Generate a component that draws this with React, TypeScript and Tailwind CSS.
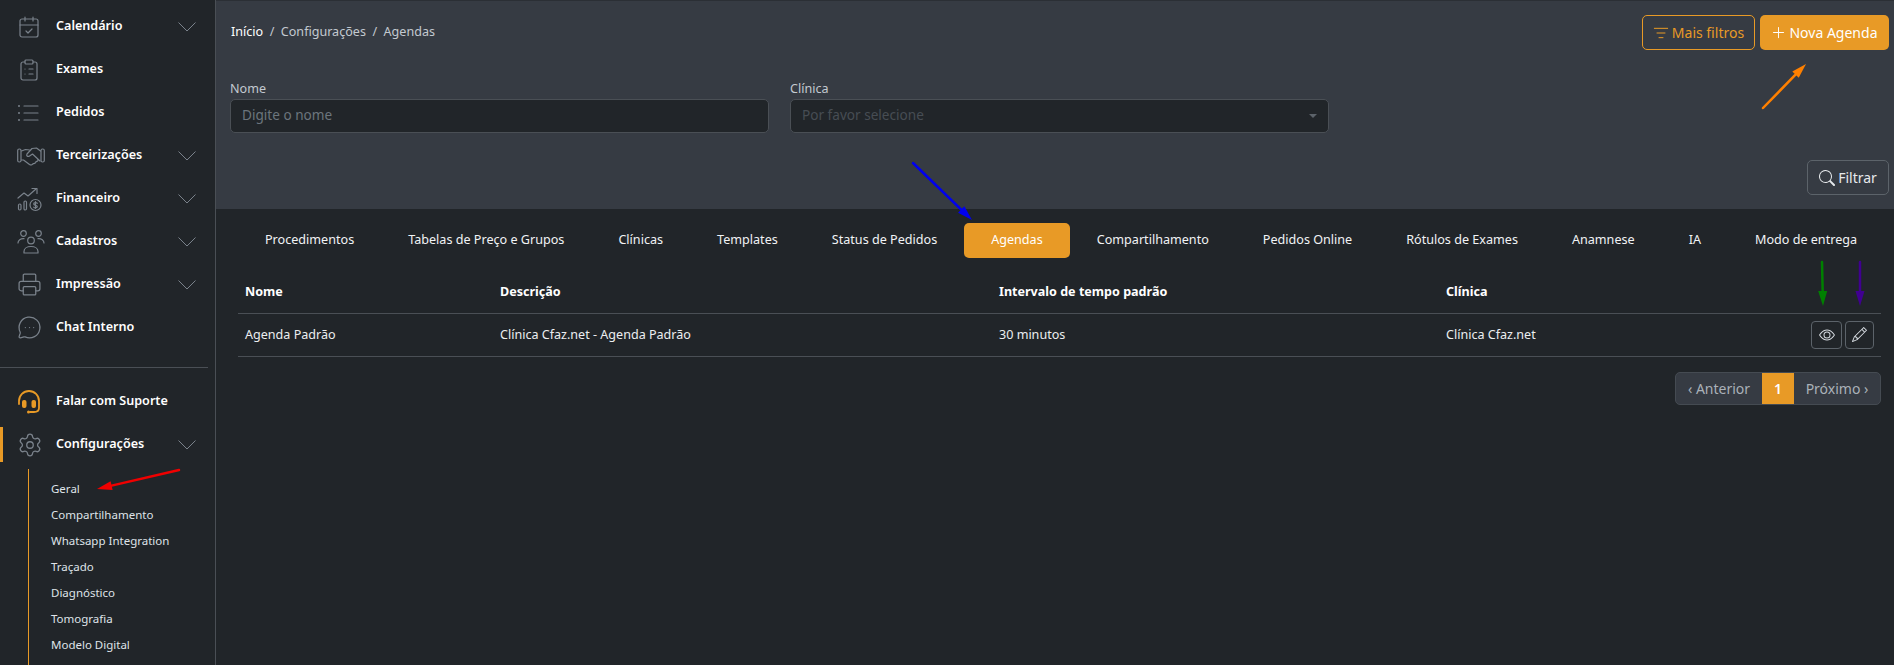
import React from "react";
import { CalendarCheck, ClipboardList, Printer, MessageCircleMore, Settings, ListFilter } from "lucide-react";
import { BsEye, BsPencil, BsSearch, BsPlusLg } from "react-icons/bs";

const GRAY = "#7a828b";

const Finance = () => (
  <svg width="26" height="26" viewBox="0 0 26 26" fill="none" stroke={GRAY} strokeWidth="1.2" strokeLinecap="round" strokeLinejoin="round">
    <path d="M1 12l6-5 4 3 8-7" />
    <path d="M15 2.500h5v5" />
    <rect x="1.500" y="18" width="2.500" height="6" rx="1.200" />
    <rect x="7" y="15" width="2.500" height="9" rx="1.200" />
    <circle cx="18.500" cy="19" r="5.500" />
    <path d="M20.300 17.300c-.5-.8-3.600-1-3.600.7 0 1.700 3.600.9 3.600 2.500 0 1.700-3.100 1.500-3.600.7M18.500 15.500v7" />
  </svg>
);

const People = () => (
  <svg width="28" height="24" viewBox="0 0 28 24" fill="none" stroke={GRAY} strokeWidth="1.2" strokeLinecap="round" strokeLinejoin="round">
    <circle cx="6.500" cy="3.500" r="2.800" />
    <circle cx="21.500" cy="3.500" r="2.800" />
    <circle cx="14" cy="10.500" r="3.300" />
    <path d="M1 13c0-3 2.500-4.500 6-4.300" />
    <path d="M27 13c0-3-2.500-4.500-6-4.300" />
    <path d="M7 23v-1.500c0-3 3-5 7-5s7 2 7 5V23z" />
  </svg>
);

const ListIcon = () => (
  <svg width="22" height="18" viewBox="0 0 22 18" fill="none" stroke={GRAY} strokeWidth="1.2" strokeLinecap="round">
    <path d="M7 2h14M7 9h14M7 16h14" />
    <circle cx="2" cy="2" r="1" fill={GRAY} stroke="none" />
    <circle cx="2" cy="9" r="1" fill={GRAY} stroke="none" />
    <circle cx="2" cy="16" r="1" fill={GRAY} stroke="none" />
  </svg>
);

const Shake = () => (
  <svg width="28" height="20" viewBox="0 0 28 20" fill="none" stroke={GRAY} strokeWidth="1.2" strokeLinecap="round" strokeLinejoin="round">
    <rect x="0.700" y="3" width="3.300" height="13" rx="1.500" />
    <rect x="24" y="3" width="3.300" height="13" rx="1.500" />
    <path d="M4.500 5l4-1.500 4 .5" />
    <path d="M23.500 5l-4-3-4.500.5-5 5.500c-1 1.500.5 3 2.200 2.200l3.300-2.200 7.500 7" />
    <path d="M4.500 14l2 0 6 4.500c1.800 1 3.500 0 3.500-1 1.800.3 3-.7 3-2 1.200 0 2.500-.8 2-2" />
  </svg>
);

const Support = () => (
  <svg width="24" height="24" viewBox="0 0 24 24" fill="none" stroke="#e89a26" strokeWidth="1.800" strokeLinecap="round">
    <path d="M2 14v-3a10 10 0 0 1 20 0v7c0 2.500-2 4-5 4h-4" />
    <rect x="5" y="10" width="4.500" height="8" rx="2" fill="#e89a26" stroke="none" />
    <rect x="14.500" y="10" width="4.500" height="8" rx="2" fill="#e89a26" stroke="none" />
    <circle cx="11.500" cy="22" r="1.500" fill="#e89a26" stroke="none" />
  </svg>
);

const Chevron = () => (
  <svg width="18" height="10" viewBox="0 0 18 10" fill="none" stroke={GRAY} strokeWidth="1">
    <path d="M0.500 0.500L9 9L17.500 0.500" />
  </svg>
);

const navTop = [
  { label: "Calendário", icon: <CalendarCheck size={24} strokeWidth={1.2} color={GRAY} />, chev: true },
  { label: "Exames", icon: <ClipboardList size={24} strokeWidth={1.2} color={GRAY} /> },
  { label: "Pedidos", icon: <ListIcon /> },
  { label: "Terceirizações", icon: <Shake />, chev: true },
  { label: "Financeiro", icon: <Finance />, chev: true },
  { label: "Cadastros", icon: <People />, chev: true },
  { label: "Impressão", icon: <Printer size={25} strokeWidth={1.2} color={GRAY} />, chev: true },
  { label: "Chat Interno", icon: <MessageCircleMore size={25} strokeWidth={1.2} color={GRAY} /> },
];
const subs = ["Geral", "Compartilhamento", "Whatsapp Integration", "Traçado", "Diagnóstico", "Tomografia", "Modelo Digital"];
const tabs = ["Procedimentos", "Tabelas de Preço e Grupos", "Clínicas", "Templates", "Status de Pedidos", "Agendas", "Compartilhamento", "Pedidos Online", "Rótulos de Exames", "Anamnese", "IA", "Modo de entrega"];

function NavItem({ label, icon, chev, active }: { label: string; icon: React.ReactNode; chev?: boolean; active?: boolean }) {
  return (
    <div className={active ? "my-[4px] flex h-[35px] items-center border-l-[3px] border-[#e89a26] pl-[14px] pr-[19px]" : "flex h-[43px] items-center pl-[17px] pr-[19px]"}>
      <span className="flex w-[39px] shrink-0 items-center">{icon}</span>
      <span className="flex-1 text-[12.6px] font-semibold text-white">{label}</span>
      {chev && <Chevron />}
    </div>
  );
}

function Arrow({ x1, y1, x2, y2, color }: { x1: number; y1: number; x2: number; y2: number; color: string }) {
  const a = Math.atan2(y2 - y1, x2 - x1);
  const L = 15, W = 4.5;
  const bx = x2 - L * Math.cos(a), by = y2 - L * Math.sin(a);
  const nx = -Math.sin(a) * W, ny = Math.cos(a) * W;
  return (
    <g>
      <line x1={x1} y1={y1} x2={bx} y2={by} stroke={color} strokeWidth="2.500" strokeLinecap="round" />
      <polygon points={`${x2},${y2} ${bx + nx},${by + ny} ${bx - nx},${by - ny}`} fill={color} />
    </g>
  );
}

export default function App() {
  return (
    <div className="relative flex h-[665px] w-[1894px] overflow-hidden bg-[#212529] font-['Noto_Sans',sans-serif] text-[12.57px] text-white">
      <aside className="flex w-[216px] shrink-0 flex-col border-r border-[#4a4f55] pt-[5px]">
        {navTop.map((n) => <NavItem key={n.label} {...n} />)}
        <div className="mt-[18px] mr-[7px] border-t border-[#4a4f55]" />
        <div className="mt-[12px]">
          <NavItem label="Falar com Suporte" icon={<Support />} />
          <NavItem label="Configurações" icon={<Settings size={26} strokeWidth={1.2} color={GRAY} />} chev active />
        </div>
        <div className="ml-[28px] mt-[3px] flex-1 border-l border-[#e89a26] pt-[7px] pl-[22px]">
          {subs.map((s) => (
            <div key={s} className="flex h-[26px] items-center text-[11.5px] text-[#dfe3e8]">{s}</div>
          ))}
        </div>
      </aside>

      <main className="flex min-w-0 flex-1 flex-col">
        <section className="h-[209px] border-t border-[#2b2f35] bg-[#363b43] pl-[14px] pr-[5px]">
          <div className="flex items-start justify-between pt-[14px]">
            <div className="flex gap-[6.5px] pl-[1px] pt-[8px] text-[12.57px] leading-[18px] text-[#c3c9d0]">
              <span className="text-white">Início</span><span>/</span><span>Configurações</span><span>/</span><span>Agendas</span>
            </div>
            <div className="flex gap-[5px]">
              <button className="flex h-[35px] w-[113px] items-center justify-center gap-[3px] rounded-[5px] border border-[#e89a26] text-[14px] text-[#e89a26]">
                <ListFilter size={16} strokeWidth={1.5} />Mais filtros
              </button>
              <button className="flex h-[35px] w-[129px] items-center justify-center gap-[3px] rounded-[5px] bg-[#e89a26] text-[14px] text-white">
                <BsPlusLg size={15} />Nova Agenda
              </button>
            </div>
          </div>
          <div className="mt-[29px] flex gap-[21px]">
            <label className="block w-[539px]">
              <div className="text-[12.57px] leading-[20px] text-[#c3c9d0]">Nome</div>
              <div className="flex h-[34px] items-center rounded-[5px] border border-[#4a4f55] bg-[#212529] px-[11px] pb-[1px] text-[13.6px] text-[#6c757d]">Digite o nome</div>
            </label>
            <label className="block w-[539px]">
              <div className="text-[12.57px] leading-[20px] text-[#c3c9d0]">Clínica</div>
              <div className="flex h-[34px] items-center justify-between rounded-[5px] border border-[#4a4f55] bg-[#212529] px-[11px] pb-[1px] text-[13.6px] text-[#474d54]">
                Por favor selecione
                <span className="h-0 w-0 border-x-[4px] border-t-[4px] border-x-transparent border-t-[#5c636a]" />
              </div>
            </label>
          </div>
          <div className="mt-[27px] flex justify-end">
            <button className="flex h-[35px] w-[82px] items-center justify-center gap-[3px] rounded-[5px] border border-[#5c636a] text-[14px] text-[#e6e9ec]">
              <BsSearch size={16} />Filtrar
            </button>
          </div>
        </section>

        <section className="px-[13px]">
          <div className="mt-[14px] flex h-[35px] items-center pl-[9px]">
            {tabs.map((t) => (
              <div key={t} className={`flex h-[35px] items-center whitespace-nowrap rounded-[5px] px-[27px] pb-[1px] text-[12.6px] ${t === "Agendas" ? "bg-[#e89a26] text-white" : "text-[#f1f3f5]"}`}>{t}</div>
            ))}
          </div>
          <div className="ml-[9px] mt-[13px]">
            <table className="w-full table-fixed border-collapse text-left text-[12.57px]">
              <colgroup>
                <col className="w-[255px]" /><col className="w-[499px]" /><col className="w-[447px]" /><col />
              </colgroup>
              <thead>
                <tr className="h-[42px] border-b border-[#4a4f55]">
                  <th className="px-[7px] pt-[1px] font-bold">Nome</th><th className="px-[7px] pt-[1px] font-bold">Descrição</th><th className="px-[7px] pt-[1px] font-bold">Intervalo de tempo padrão</th><th className="px-[7px] pt-[1px] font-bold">Clínica</th>
                </tr>
              </thead>
              <tbody>
                <tr className="h-[43px] border-b border-[#4a4f55] text-[#eceef0]">
                  <td className="px-[7px] pt-[1px]">Agenda Padrão</td>
                  <td className="px-[7px] pt-[1px]">Clínica Cfaz.net - Agenda Padrão</td>
                  <td className="px-[7px] pt-[1px]">30 minutos</td>
                  <td className="px-[7px]">
                    <div className="flex items-center justify-between">
                      <span className="pt-[1px]">Clínica Cfaz.net</span>
                      <span className="flex gap-[3px]">
                        <span className="flex h-[28px] w-[31px] items-center justify-center rounded-[4px] border border-[#5c636a]"><BsEye size={16} className="text-[#d5dae0]" /></span>
                        <span className="flex h-[28px] w-[29px] items-center justify-center rounded-[4px] border border-[#5c636a]"><BsPencil size={15} className="text-[#d5dae0]" /></span>
                      </span>
                    </div>
                  </td>
                </tr>
              </tbody>
            </table>
            <div className="mt-[15px] flex justify-end">
              <div className="flex h-[33px] overflow-hidden rounded-[5px] border border-[#454b52] bg-[#363b43] text-[14px] text-[#aab1b8]">
                <span className="flex w-[86px] items-center justify-center">‹ Anterior</span>
                <span className="flex w-[32px] items-center justify-center bg-[#e89a26] font-semibold text-white">1</span>
                <span className="flex w-[86px] items-center justify-center">Próximo ›</span>
              </div>
            </div>
          </div>
        </section>
      </main>

      <svg className="pointer-events-none absolute left-0 top-0" width="1894" height="665">
        <Arrow x1={179} y1={470} x2={97} y2={489} color="#f00000" />
        <Arrow x1={1763} y1={108} x2={1806} y2={64} color="#ff8000" />
        <Arrow x1={913} y1={163} x2={972} y2={220} color="#0000f0" />
        <Arrow x1={1822} y1={262} x2={1823} y2={306} color="#008000" />
        <Arrow x1={1860} y1={262} x2={1860} y2={306} color="#400090" />
      </svg>
    </div>
  );
}
